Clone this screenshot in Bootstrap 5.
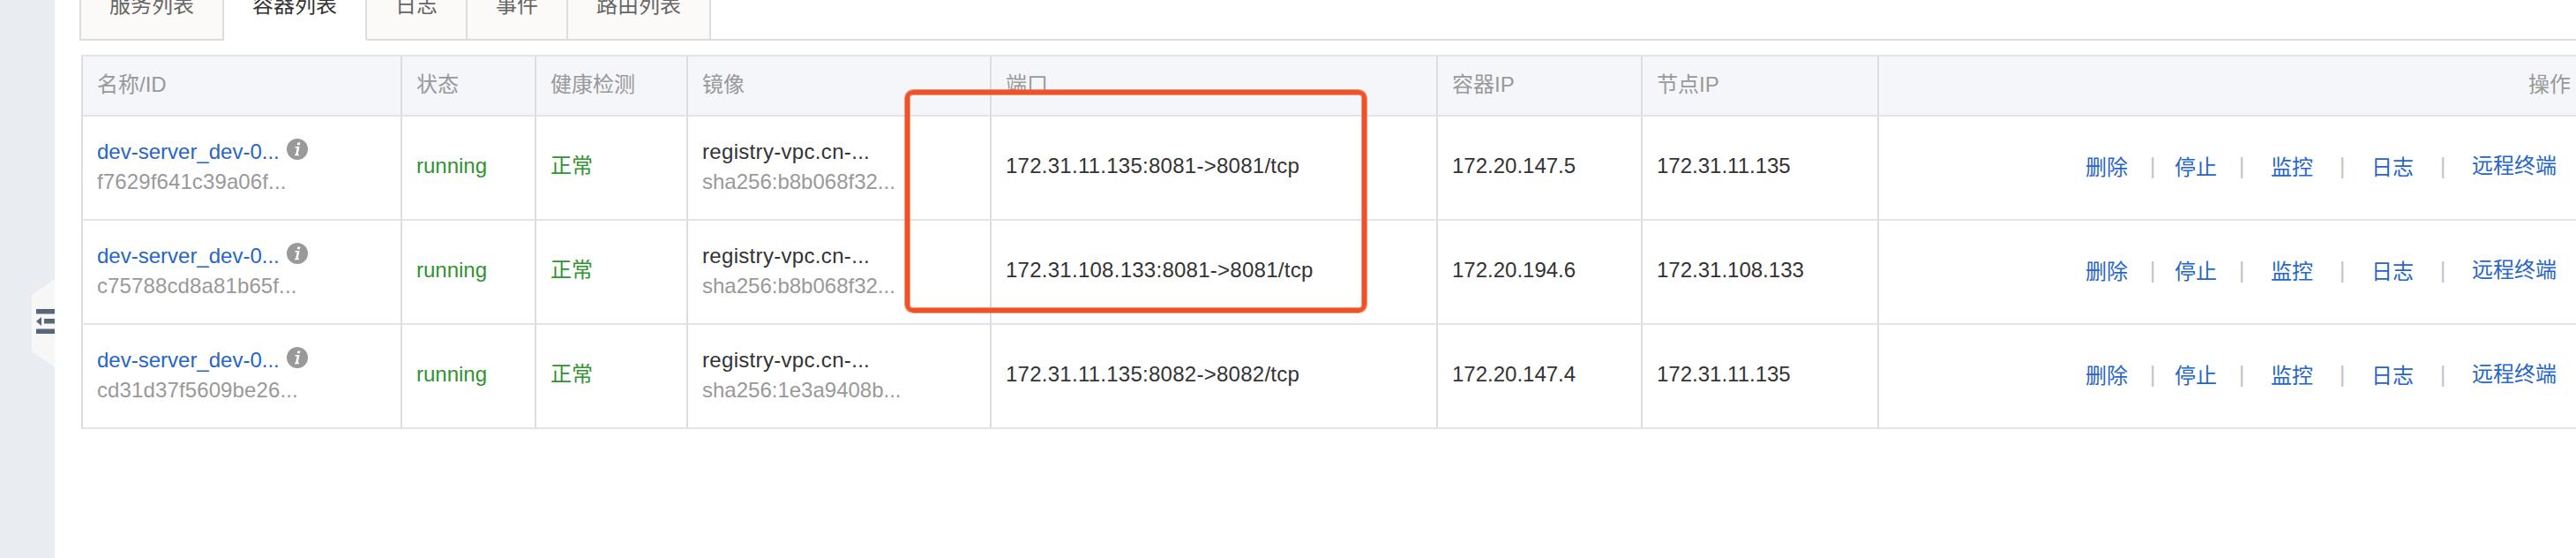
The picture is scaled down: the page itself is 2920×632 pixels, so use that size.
<!DOCTYPE html>
<html lang="zh-CN">
<head>
<meta charset="utf-8">
<meta name="viewport" content="width=device-width, initial-scale=1">
<title>容器列表</title>
<link href="https://cdn.jsdelivr.net/npm/bootstrap@5.3.0/dist/css/bootstrap.min.css" rel="stylesheet">
<style>
  body { font-family: "Liberation Sans", "Noto Sans CJK SC", sans-serif; font-size: 24px; line-height: 34px; color: #333; background: #fff; height: 632px; overflow: hidden; }
  a { color: #2665c9; text-decoration: none; }
  .side-rail { width: 62px; background: #e9edf2; }
  .rail-toggle { width: 26px; height: 100px; margin-top: 316px; }
  .content-pane { padding-left: 30px; min-width: 0; }
  .tab-strip { height: 46px; margin-left: -2px; }
  .tab-item { height: 46px; background: #fbfaf8; color: #666; border-right: 2px solid #ddd; border-bottom: 2px solid #ddd; }
  .tab-item span { display: block; margin-top: -11px; }
  .tab-item.first { width: 164px; border-left: 2px solid #ddd; }
  .tab-item.current { width: 162px; background: #fff; color: #333; border-bottom-color: #fff; }
  .tab-fill { border-bottom: 2px solid #ddd; }
  .data-table { width: 2838px; table-layout: fixed; border-collapse: separate; border-spacing: 0; margin: 16px 0 0; border-top: 2px solid #e1e5ea; }
  .data-table th, .data-table td { border: 0; border-bottom: 2px solid #e1e5ea; border-left: 2px solid #ddd; padding: 0 16px 4px; vertical-align: middle; white-space: nowrap; }
  .data-table th { height: 68px; background: #f4f6fa; color: #999; font-weight: 400; padding-bottom: 3px; }
  .data-table td { height: 118px; }
  .data-table td.two-line { padding-bottom: 3px; }
  .sub { color: #999; }
  .container-id { letter-spacing: .12px; }
  .image-name { letter-spacing: .32px; }
  .port-map { letter-spacing: .26px; }
  .info { margin: 2px 0 0 8px; }
  .ok { color: #2f942f; }
  .ops { margin-right: 16px; }
  .ops a { margin: 2px 30px -2px; }
  .ops a:first-child { margin-right: 25px; }
  .ops a.stop { margin-left: 22px; margin-right: 25px; }
  .ops a.term { margin: 0 0 0 30px; }
  .sep { color: #c4c4c4; width: 6px; font-size: 26px; display: flex; justify-content: center; }
  .highlight-box { position: absolute; left: 1026px; top: 102px; width: 523px; height: 252px; border: 5px solid #f05228; border-radius: 9px; box-shadow: 0 0 0 1px rgba(240,82,40,.6), inset 0 0 0 1px rgba(240,82,40,.6); }
</style>
</head>
<body class="position-relative">
<div class="d-flex h-100">
  <aside class="side-rail d-flex justify-content-end flex-shrink-0">
    <svg class="rail-toggle" viewBox="0 0 26 100"><path d="M26 0 0 18v64l26 18z" fill="#f7f7f7"/><path d="M5 34h21v5.600H5zM14 45h12v5.600H14zM5 56.400h21V62H5zM5 48l6-5v10z" fill="#596679"/></svg>
  </aside>
  <main class="content-pane flex-grow-1">
    <nav class="tab-strip d-flex text-center">
      <div class="tab-item first"><span>服务列表</span></div>
      <div class="tab-item current"><span>容器列表</span></div>
      <div class="tab-item" style="width:114px"><span>日志</span></div>
      <div class="tab-item" style="width:114px"><span>事件</span></div>
      <div class="tab-item" style="width:162px"><span>路由列表</span></div>
      <div class="tab-fill flex-grow-1"></div>
    </nav>
    <table class="data-table">
      <colgroup><col style="width:362px"><col style="width:152px"><col style="width:172px"><col style="width:344px"><col style="width:506px"><col style="width:232px"><col style="width:268px"><col></colgroup>
      <thead><tr><th>名称/ID</th><th>状态</th><th>健康检测</th><th>镜像</th><th>端口</th><th>容器IP</th><th>节点IP</th><th class="text-end">操作</th></tr></thead>
      <tbody id="rows"></tbody>
    </table>
  </main>
</div>
<div class="highlight-box"></div>
<script>
  const data = [
    ["f7629f641c39a06f...", "sha256:b8b068f32...", "172.31.11.135:8081->8081/tcp", "172.20.147.5", "172.31.11.135"],
    ["c75788cd8a81b65f...", "sha256:b8b068f32...", "172.31.108.133:8081->8081/tcp", "172.20.194.6", "172.31.108.133"],
    ["cd31d37f5609be26...", "sha256:1e3a9408b...", "172.31.11.135:8082->8082/tcp", "172.20.147.4", "172.31.11.135"]
  ];
  document.getElementById("rows").innerHTML = data.map(([id, sha, port, ip, node]) => `
    <tr>
      <td class="two-line"><div class="d-flex"><a href="#">dev-server_dev-0...</a><svg class="info" width="24" height="24" viewBox="0 0 24 24"><circle cx="12" cy="12" r="12" fill="#999"/><path d="M12.400 4.500h3l-.6 2.800h-3zM9.600 9h5l-1.900 8.700h1.400l-.4 1.500H8.900l.3-1.500h1l1.500-7.200H9.300z" fill="#fff"/></svg></div><div class="sub container-id">${id}</div></td>
      <td class="ok">running</td><td class="ok">正常</td>
      <td class="two-line"><div class="image-name">registry-vpc.cn-...</div><div class="sub">${sha}</div></td>
      <td class="port-map">${port.replace(">", "&gt;")}</td><td>${ip}</td><td>${node}</td>
      <td><div class="ops d-flex justify-content-end"><a href="#">删除</a><span class="sep">|</span><a href="#" class="stop">停止</a><span class="sep">|</span><a href="#">监控</a><span class="sep">|</span><a href="#">日志</a><span class="sep">|</span><a href="#" class="term">远程终端</a></div></td>
    </tr>`).join("");
</script>
<script src="https://cdn.jsdelivr.net/npm/bootstrap@5.3.0/dist/js/bootstrap.bundle.min.js"></script>
</body>
</html>
